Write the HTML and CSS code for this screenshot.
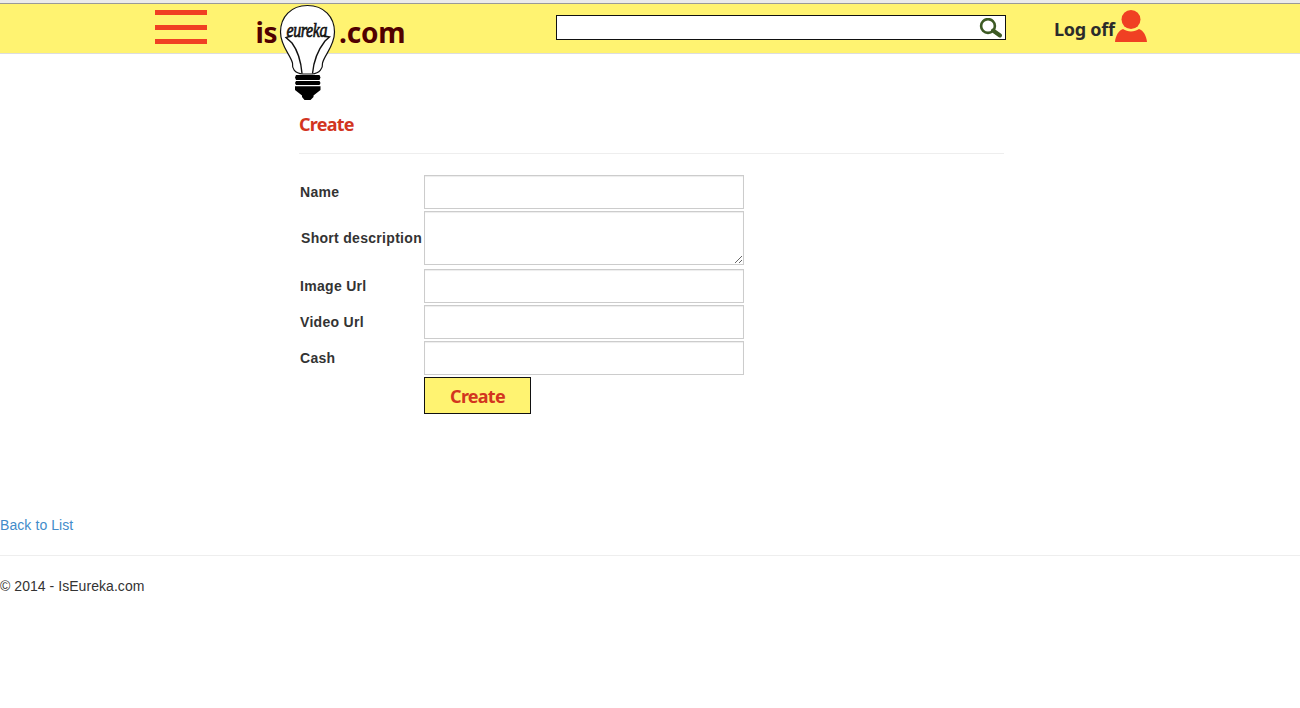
FILE: index.html
```html
<!DOCTYPE html>
<html lang="en">

<head>
    <meta charset="UTF-8">
    <meta name="viewport" content="width=device-width, initial-scale=1.0">
    <title>Create - IsEureka.com</title>
    <link rel="stylesheet" href="styles.css">
</head>

<body>
    <header class="navbar">
        <button type="button" class="menu" aria-label="Menu">
            <span></span>
            <span></span>
            <span></span>
        </button>
        <a class="logo" href="#" aria-label="iseureka.com">
            <svg width="150" height="97" viewBox="256 4 150 97">
                <g class="logo-text">
                    <text x="255.5" y="43" textLength="22">is</text>
                    <text x="339" y="43" textLength="66.5">.com</text>
                </g>
                <!-- glass -->
                <path d="M307.500 5.500C291 5.500 280.500 17 280.500 32C280.500 46 290 54 292.500 63C292 68 294 73.500 303 74H312C320 73.500 323 68 322.500 63C325 54 334.500 46 334.500 32C334.500 17 324 5.500 307.500 5.500Z" fill="#fff" stroke="#111" stroke-width="1.200" />
                <!-- filament -->
                <path d="M291 36L286 37.500L292 43C298 51 301 62 302 73.500M324 36L329.500 37L325 41C318 50 313.500 62 312.500 73.500" fill="none" stroke="#111" stroke-width="1.400" />
                <text class="script" transform="translate(286.500 37) scale(1 1.350)" textLength="41">eureka</text>
                <!-- cap -->
                <path d="M296 75H319.500L320.500 77.500L319.500 80H296L295 77.500ZM296 81H319.500L320.500 83L319.500 85H296L295 83ZM295 86.300H320.500V90L313.500 95.500V97L310.500 100H304.500L302 97V95.500L295 90Z" fill="#000" />
            </svg>
        </a>
        <form class="search">
            <input type="text" aria-label="Search">
            <svg width="24" height="22" viewBox="0 0 24 22">
                <circle cx="9" cy="8" r="6.900" fill="none" stroke="#3d5a24" stroke-width="2.600" />
                <path d="M14 12.500L21 17.500" stroke="#3d5a24" stroke-width="4" stroke-linecap="round" />
            </svg>
        </form>
        <a class="account" href="#">
            <span>Log off</span>
            <svg width="32" height="32" viewBox="0 0 32 32" fill="#f04023">
                <circle cx="16" cy="9.500" r="9.500" />
                <path d="M0 32C.5 26 3.500 20.500 8 19C12.500 22.200 19.500 22.200 24 19C28.500 20.500 31.500 26 32 32Z" />
            </svg>
        </a>
    </header>

    <main>
        <h2>Create</h2>
        <hr>
        <form class="create-form">
            <label for="name">Name</label>
            <input type="text" id="name">
            <label for="description" class="multiline">Short description</label>
            <textarea id="description"></textarea>
            <label for="image">Image Url</label>
            <input type="text" id="image">
            <label for="video">Video Url</label>
            <input type="text" id="video">
            <label for="cash">Cash</label>
            <input type="text" id="cash">
            <button type="submit">Create</button>
        </form>
    </main>

    <a class="back" href="#">Back to List</a>
    <hr>
    <footer>&copy; 2014 - IsEureka.com</footer>
</body>

</html>
```

FILE: styles.css
```css
* {
    box-sizing: border-box;
    margin: 0;
    padding: 0;
}

body {
    font: 14px/20px "Liberation Sans", Arial, sans-serif;
    color: #333;
    background: #fff;
    border-top: 3px solid #ebebeb;
}

a {
    color: #428bca;
    text-decoration: none;
}

hr {
    border: 0;
    border-top: 1px solid #eee;
}

.navbar {
    display: flex;
    align-items: flex-start;
    height: 51px;
    padding-left: 155px;
    background: #fff371;
    border-top: 1px solid #999;
    border-bottom: 1px solid #ddd;
}

.menu {
    display: flex;
    flex-direction: column;
    justify-content: space-between;
    width: 52px;
    height: 34px;
    margin-top: 6px;
    border: 0;
    background: none;
}

.menu span {
    width: 52px;
    height: 5px;
    background: #f04023;
}

.logo {
    width: 150px;
    margin-left: 49px;
}

.logo svg {
    display: block;
}

.logo-text {
    font: bold 28px "Noto Sans", sans-serif;
    fill: #500000;
}

.script {
    font: italic 16px "Liberation Serif", cursive;
    fill: #111;
    stroke: #111;
    stroke-width: 0.5px;
}

.search {
    display: flex;
    width: 450px;
    height: 25px;
    margin-top: 11px;
    margin-left: 150px;
    background: #fff;
    border: 1px solid #111;
}

.search input {
    flex: 1;
    border: 0;
    outline: 0;
    background: none;
}

.search svg {
    margin: 2px 2px 0 0;
}

.account {
    display: flex;
    margin-top: 6px;
    margin-left: 48px;
    color: #2b2b2b;
    font: bold 18px/38px "Noto Sans", sans-serif;
}

.account span {
    width: 61px;
    white-space: nowrap;
    letter-spacing: -0.25px;
}

main {
    width: 705px;
    height: 461px;
    margin-left: 299px;
    padding-top: 60px;
}

h2 {
    height: 39px;
    color: #d2351f;
    font: bold 18px/20px "Noto Sans", sans-serif;
    letter-spacing: -0.75px;
}

.create-form {
    display: grid;
    grid-template-columns: 122px 320px;
    gap: 2px;
    align-items: center;
    margin-top: 21px;
    margin-left: 1px;
}

.create-form label {
    font-weight: bold;
    white-space: nowrap;
    letter-spacing: 0.3px;
}

.create-form .multiline {
    padding: 0 0 2px 1px;
}

.create-form input,
.create-form textarea {
    display: block;
    width: 320px;
    height: 34px;
    padding: 6px 12px;
    background: #fff;
    border: 1px solid #ccc;
    box-shadow: inset 0 1px 1px rgba(0, 0, 0, 0.075);
}

.create-form textarea {
    height: 54px;
    margin-bottom: 2px;
}

.create-form button {
    grid-column: 2;
    width: 107px;
    height: 37px;
    background: #fff371;
    border: 1px solid #111;
    color: #d2351f;
    font: bold 18px/20px "Noto Sans", sans-serif;
    letter-spacing: -0.75px;
}

.back {
    display: block;
    margin-bottom: 20px;
    letter-spacing: 0.08px;
}

footer {
    margin-top: 20px;
    letter-spacing: 0.05px;
}
```
